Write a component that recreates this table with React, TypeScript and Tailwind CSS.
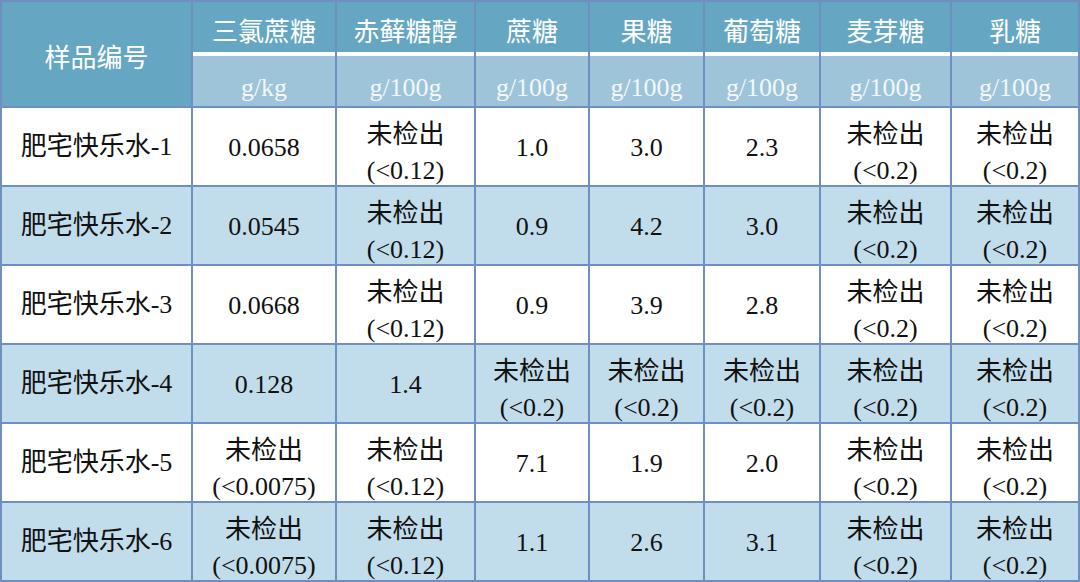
import React from "react";

const cols = ["三氯蔗糖", "赤藓糖醇", "蔗糖", "果糖", "葡萄糖", "麦芽糖", "乳糖"];
const units = ["g/kg", "g/100g", "g/100g", "g/100g", "g/100g", "g/100g", "g/100g"];

type Cell = string | [string, string];

const rows: { name: string; cells: Cell[] }[] = [
  { name: "肥宅快乐水-1", cells: ["0.0658", ["未检出", "(<0.12)"], "1.0", "3.0", "2.3", ["未检出", "(<0.2)"], ["未检出", "(<0.2)"]] },
  { name: "肥宅快乐水-2", cells: ["0.0545", ["未检出", "(<0.12)"], "0.9", "4.2", "3.0", ["未检出", "(<0.2)"], ["未检出", "(<0.2)"]] },
  { name: "肥宅快乐水-3", cells: ["0.0668", ["未检出", "(<0.12)"], "0.9", "3.9", "2.8", ["未检出", "(<0.2)"], ["未检出", "(<0.2)"]] },
  { name: "肥宅快乐水-4", cells: ["0.128", "1.4", ["未检出", "(<0.2)"], ["未检出", "(<0.2)"], ["未检出", "(<0.2)"], ["未检出", "(<0.2)"], ["未检出", "(<0.2)"]] },
  { name: "肥宅快乐水-5", cells: [["未检出", "(<0.0075)"], ["未检出", "(<0.12)"], "7.1", "1.9", "2.0", ["未检出", "(<0.2)"], ["未检出", "(<0.2)"]] },
  { name: "肥宅快乐水-6", cells: [["未检出", "(<0.0075)"], ["未检出", "(<0.12)"], "1.1", "2.6", "3.1", ["未检出", "(<0.2)"], ["未检出", "(<0.2)"]] },
];

const font = { fontFamily: '"Liberation Serif", "Noto Sans CJK SC", serif' };

export default function App() {
  return (
    <div className="w-[1080px] h-[582px] bg-white" style={font}>
      <div className="grid grid-cols-[189px_142px_137px_112px_113px_114px_129px_126px] grid-rows-[104px_repeat(6,77px)] gap-[2px] p-[2px] bg-[#6e8fc0] text-[26px] text-[#111]">
        <div className="bg-[#65a7c3] text-white flex items-center justify-center pt-[2px]" style={{ fontFamily: '"Noto Sans CJK SC", sans-serif' }}>
          样品编号
        </div>
        {cols.map((c, i) => (
          <div key={c} className="flex flex-col bg-white">
            <div className="h-[50px] bg-[#65a7c3] text-white flex items-center justify-center pt-[4px]" style={{ fontFamily: '"Noto Sans CJK SC", sans-serif' }}>
              {c}
            </div>
            <div className="h-[4px] bg-white" />
            <div className="h-[50px] bg-[#9dc4d9] text-[#f2f7fa] flex items-center justify-center pt-[12px]">
              {units[i]}
            </div>
          </div>
        ))}
        {rows.map((r, ri) => {
          const bg = ri % 2 === 0 ? "bg-white" : "bg-[#c1dcea]";
          return (
            <React.Fragment key={r.name}>
              <div className={`${bg} flex items-center justify-center`}>{r.name}</div>
              {r.cells.map((c, ci) =>
                Array.isArray(c) ? (
                  <div key={ci} className={`${bg} flex flex-col items-center justify-start leading-[36px] pt-[9px] overflow-hidden`}>
                    <span>{c[0]}</span>
                    <span>{c[1]}</span>
                  </div>
                ) : (
                  <div key={ci} className={`${bg} flex items-center justify-center pt-[2px]`}>
                    {c}
                  </div>
                )
              )}
            </React.Fragment>
          );
        })}
      </div>
    </div>
  );
}
